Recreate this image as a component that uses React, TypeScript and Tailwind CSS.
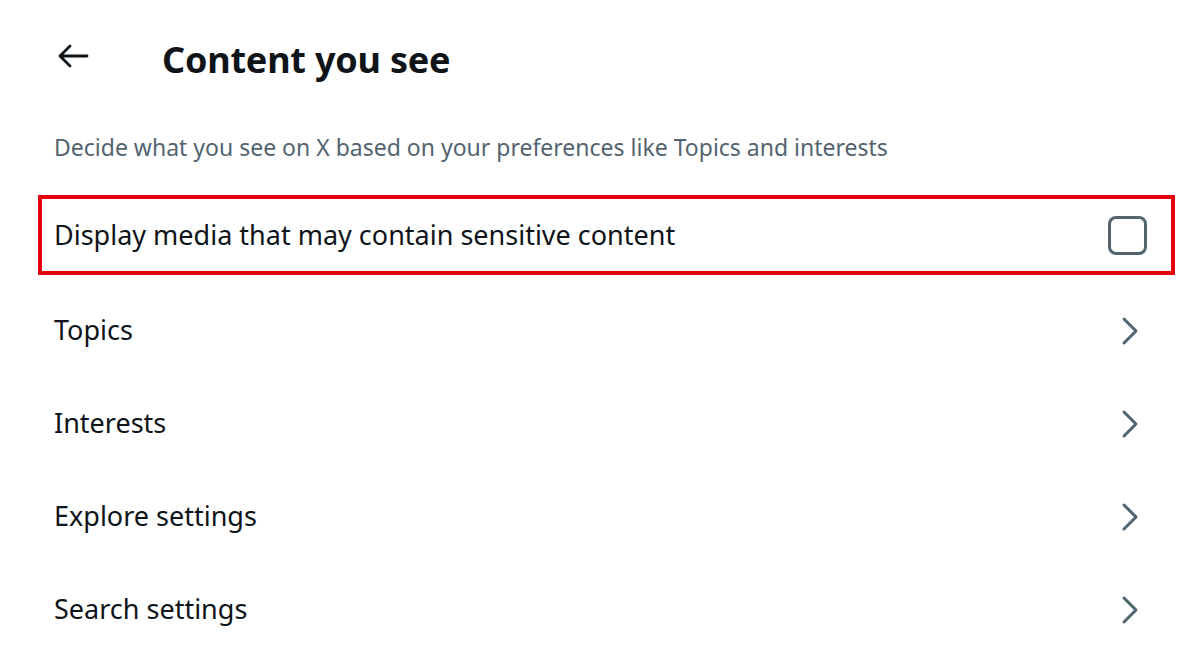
import React from "react";

const font = { fontFamily: '"Noto Sans", "Open Sans", sans-serif' };

function Chevron() {
  return (
    <svg width="18" height="30" viewBox="0 0 18 30" fill="none" className="shrink-0">
      <path d="M3 3 L15 15 L3 27" stroke="#536471" strokeWidth="3" strokeLinecap="round" strokeLinejoin="round" />
    </svg>
  );
}

function Row({ label }: { label: string }) {
  return (
    <div className="flex h-[93px] items-center justify-between pl-[54px] pr-[60px]">
      <span className="text-[27px] text-[#0f1419]">{label}</span>
      <Chevron />
    </div>
  );
}

export default function App() {
  return (
    <div className="h-[669px] w-[1199px] overflow-hidden bg-white" style={font}>
      <div className="flex h-[120px] items-center">
        <div className="flex w-[162px] justify-start pl-[57px] pb-[8px]">
          <svg width="32" height="24" viewBox="0 0 32 24" fill="none">
            <path d="M30 12 H3 M13 2 L3 12 L13 22" stroke="#0f1419" strokeWidth="2.8" strokeLinecap="round" strokeLinejoin="round" />
          </svg>
        </div>
        <h1 className="text-[36px] font-bold tracking-[-0.2px] text-[#0f1419]">Content you see</h1>
      </div>
      <p className="mt-[11px] pl-[54px] text-[23px] leading-[32px] text-[#536471]">
        Decide what you see on X based on your preferences like Topics and interests
      </p>
      <div className="mt-[32px] ml-[38px] mr-[24px] flex h-[80px] items-center justify-between border-4 border-[#e8000b] pl-[12px] pr-[24px]">
        <span className="text-[27px] text-[#0f1419]">Display media that may contain sensitive content</span>
        <div className="h-[39px] w-[39px] rounded-[8px] border-[3px] border-[#536471]" />
      </div>
      <div className="mt-[9px]">
        <Row label="Topics" />
        <Row label="Interests" />
        <Row label="Explore settings" />
        <Row label="Search settings" />
      </div>
    </div>
  );
}
